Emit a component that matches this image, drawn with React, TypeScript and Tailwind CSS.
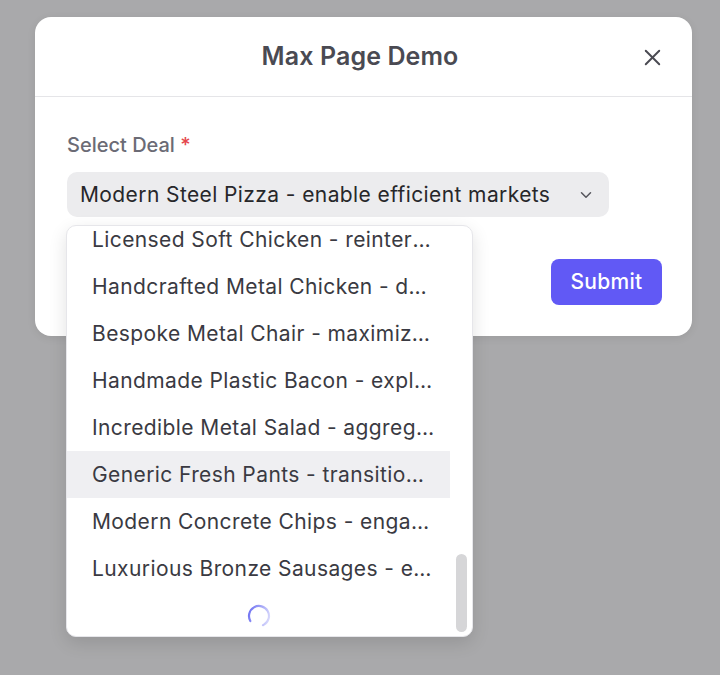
import { X, ChevronDown } from 'lucide-react'

const DEALS = [
  'Licensed Soft Chicken - reintermediate scalable synergies',
  'Handcrafted Metal Chicken - deliver turn-key models',
  'Bespoke Metal Chair - maximize visionary niches',
  'Handmade Plastic Bacon - exploit proactive schemas',
  'Incredible Metal Salad - aggregate real-time portals',
  'Generic Fresh Pants - transition sticky channels',
  'Modern Concrete Chips - engage dynamic metrics',
  'Luxurious Bronze Sausages - envisioneer web services',
]

const HIGHLIGHTED = 5

function Spinner() {
  return (
    <svg width="24" height="24" viewBox="0 0 24 24" className="block">
      <defs>
        <linearGradient id="spin" x1="0" y1="0" x2="1" y2="1">
          <stop offset="0%" stopColor="#6366f1" stopOpacity="0.15" />
          <stop offset="100%" stopColor="#6366f1" stopOpacity="1" />
        </linearGradient>
      </defs>
      <circle cx="12" cy="12" r="10" fill="none" stroke="url(#spin)" strokeWidth="2.2"
        strokeDasharray="48 20" strokeLinecap="round" transform="rotate(150 12 12)" />
    </svg>
  )
}

export default function App() {
  return (
    <div className="min-h-[675px] w-[720px] bg-[#a9a9ab] pt-[17px] pl-[35px]" style={{ fontFamily: 'Inter, "Noto Sans", sans-serif' }}>
      <div className="w-[657px] rounded-[16px] bg-white shadow-[0_2px_8px_rgba(0,0,0,0.08)]">
        {/* header */}
        <div className="relative flex h-[80px] items-center justify-center border-b border-[#e5e5e8] pr-[7px]">
          <h2 className="text-[25px] font-semibold tracking-[0.1px] text-[#4a4a52]">Max Page Demo</h2>
          <button className="absolute right-[26px] top-[27px] text-[#4a4a52]">
            <X className="h-[27px] w-[27px]" strokeWidth={1.7} />
          </button>
        </div>

        {/* body */}
        <div className="pl-[32px] pr-[30px] pt-[36px] pb-[31px]">
          <label className="block text-[20px] font-medium leading-[24px] text-[#6b6b75]">
            Select Deal <span className="text-[#e5484d]">*</span>
          </label>

          <div className="relative mt-[15px] w-[542px]">
            <div className="flex h-[45px] items-center justify-between rounded-[10px] bg-[#ececee] pl-[13px] pr-[14px]">
              <span className="text-[21px] tracking-[0.4px] text-[#27272a]">Modern Steel Pizza - enable efficient markets</span>
              <ChevronDown className="h-[18px] w-[18px] text-[#55555c]" strokeWidth={2} />
            </div>

            {/* dropdown */}
            <div className="absolute left-[-1px] top-[53px] z-10 flex h-[412px] w-[407px] overflow-hidden rounded-[10px] border border-[#e6e6ea] bg-white shadow-[0_6px_18px_rgba(0,0,0,0.12)]">
              <div className="w-[383px] overflow-hidden">
                <div className="-mt-[10px]">
                  {DEALS.map((d, i) => (
                    <div key={d}
                      className={
                        'h-[47px] truncate pl-[25px] pr-[14px] text-[21px] leading-[47px] tracking-[0.4px] text-[#3a3a42] ' +
                        (i === HIGHLIGHTED ? 'bg-[#efeff2]' : '')
                      }>
                      {d}
                    </div>
                  ))}
                  <div className="flex h-[47px] items-center justify-center">
                    <Spinner />
                  </div>
                </div>
              </div>
              <div className="flex flex-1 flex-col justify-end pb-[4px] pl-[6px] pr-[5px]">
                <div className="h-[78px] w-[11px] rounded-full bg-[#d6d6d8]" />
              </div>
            </div>
          </div>

          <div className="mt-[42px] flex justify-end">
            <button className="h-[46px] w-[111px] rounded-[8px] bg-[#6159f5] text-[21px] font-medium tracking-[0.3px] text-white">
              Submit
            </button>
          </div>
        </div>
      </div>
    </div>
  )
}
